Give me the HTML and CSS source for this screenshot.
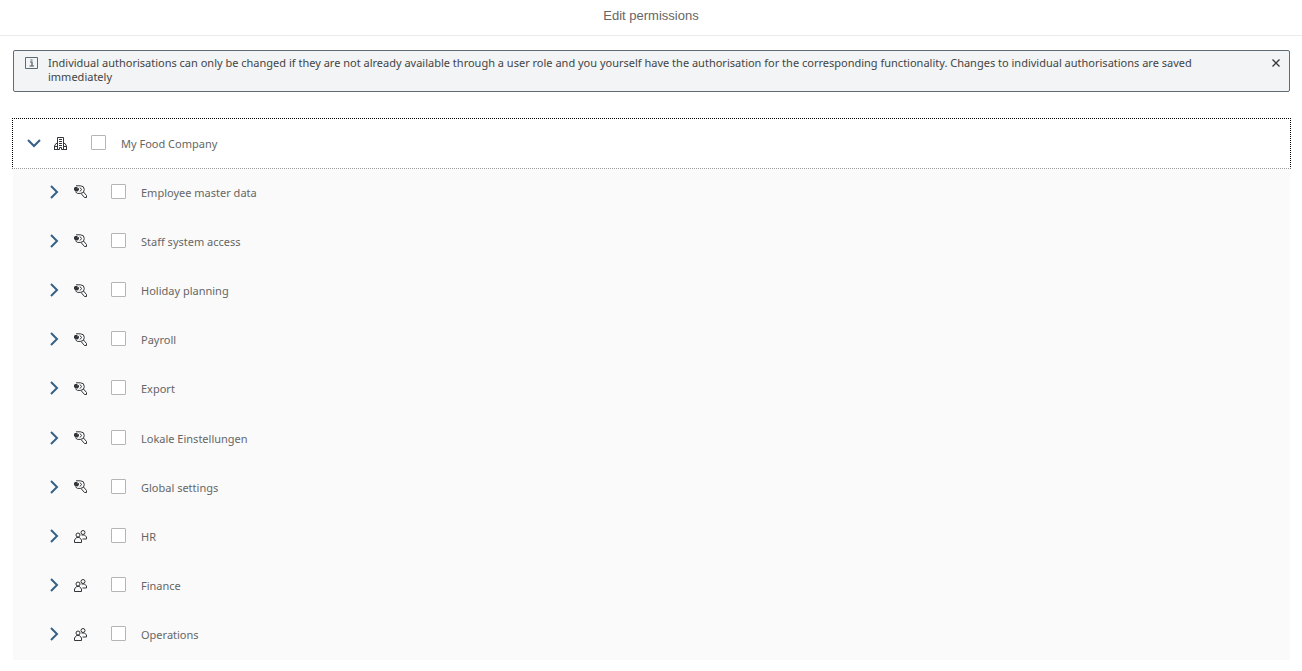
FILE: index.html
```html
<!DOCTYPE html>
<html lang="en">
<head>
    <meta charset="UTF-8">
    <meta name="viewport" content="width=device-width, initial-scale=1.0">
    <title>Edit permissions</title>
    <link rel="stylesheet" href="styles.css">
</head>
<body>
    <!-- icons shared by the rows -->
    <svg class="sprite" aria-hidden="true">
        <symbol id="down" viewBox="0 0 14 14"><path d="M1 4l6 6 6-6" fill="none" stroke="#346187" stroke-width="2"/></symbol>
        <symbol id="right" viewBox="0 0 14 14"><path d="M4 1l6 6-6 6" fill="none" stroke="#346187" stroke-width="2"/></symbol>
        <symbol id="building" viewBox="0 0 13 13">
            <path d="M3.500 12V.5h6V12M.5 12.500V9l1.500-2.500h1.500M9.500 6.500H11L12.500 9v3.500M0 12.500h5.500v-2h2v2H13" fill="none" stroke="#32363a"/>
            <path d="M5 2.500h3M5 4.500h3M5 6.500h3M5 8.500h3M1 9.500h2M10 9.500h2" fill="none" stroke="#32363a"/>
        </symbol>
        <symbol id="key" viewBox="0 0 13 13">
            <path d="M2 .8h4.500a3.800 3.800 0 0 1 0 7.600H3.500L1.500 7" fill="none" stroke="#32363a"/>
            <path d="M1 2h2.500v1.500L5 3v2L3.500 6.500H1.500L0 5V3z" fill="#32363a"/>
            <path d="M6 2.500l1.500 2L6 6.500M9.500 7l3 3.500v2h-2L7 8.500" fill="none" stroke="#32363a"/>
        </symbol>
        <symbol id="group" viewBox="0 0 13 13">
            <circle cx="4" cy="5" r="2" fill="none" stroke="#32363a"/>
            <path d="M.5 12.500v-2.500L2.500 7.500h3L7.500 10v2.500z" fill="none" stroke="#32363a"/>
            <circle cx="9" cy="2.500" r="2" fill="none" stroke="#32363a"/>
            <path d="M7.500 5h3l2 2v2H8.500" fill="none" stroke="#32363a"/>
        </symbol>
    </svg>

    <header class="title-bar">
        <h1>Edit permissions</h1>
    </header>

    <main class="content">
        <div class="message" role="status">
            <svg class="info" viewBox="0 0 13 12" aria-hidden="true">
                <path d="M.5.5h12v11H.5z" fill="none" stroke="#5a6b76"/>
                <path d="M5 5h2v4M4.500 9h4.500M5.500 3h2" fill="none" stroke="#4a5862" stroke-width="1.200"/>
            </svg>
            <p>Individual authorisations can only be changed if they are not already available through a user role and you yourself have the authorisation for the corresponding functionality. Changes to individual authorisations are saved immediately</p>
            <button class="close" type="button" aria-label="Close">
                <svg viewBox="0 0 8 8" aria-hidden="true"><path d="M.5.5l7 7M7.500.5l-7 7" stroke="#32363a" stroke-width="1.300"/></svg>
            </button>
        </div>

        <ul class="tree">
            <li class="row root">
                <button class="toggle" type="button" aria-label="Collapse"><svg><use href="#down"/></svg></button>
                <svg class="icon"><use href="#building"/></svg>
                <input type="checkbox" id="company"><label for="company">My Food Company</label>
            </li>
            <li class="row">
                <button class="toggle" type="button" aria-label="Expand"><svg><use href="#right"/></svg></button>
                <svg class="icon"><use href="#key"/></svg>
                <input type="checkbox" id="employee"><label for="employee">Employee master data</label>
            </li>
            <li class="row">
                <button class="toggle" type="button" aria-label="Expand"><svg><use href="#right"/></svg></button>
                <svg class="icon"><use href="#key"/></svg>
                <input type="checkbox" id="staff"><label for="staff">Staff system access</label>
            </li>
            <li class="row">
                <button class="toggle" type="button" aria-label="Expand"><svg><use href="#right"/></svg></button>
                <svg class="icon"><use href="#key"/></svg>
                <input type="checkbox" id="holiday"><label for="holiday">Holiday planning</label>
            </li>
            <li class="row">
                <button class="toggle" type="button" aria-label="Expand"><svg><use href="#right"/></svg></button>
                <svg class="icon"><use href="#key"/></svg>
                <input type="checkbox" id="payroll"><label for="payroll">Payroll</label>
            </li>
            <li class="row">
                <button class="toggle" type="button" aria-label="Expand"><svg><use href="#right"/></svg></button>
                <svg class="icon"><use href="#key"/></svg>
                <input type="checkbox" id="export"><label for="export">Export</label>
            </li>
            <li class="row">
                <button class="toggle" type="button" aria-label="Expand"><svg><use href="#right"/></svg></button>
                <svg class="icon"><use href="#key"/></svg>
                <input type="checkbox" id="local"><label for="local">Lokale Einstellungen</label>
            </li>
            <li class="row">
                <button class="toggle" type="button" aria-label="Expand"><svg><use href="#right"/></svg></button>
                <svg class="icon"><use href="#key"/></svg>
                <input type="checkbox" id="global"><label for="global">Global settings</label>
            </li>
            <li class="row">
                <button class="toggle" type="button" aria-label="Expand"><svg><use href="#right"/></svg></button>
                <svg class="icon"><use href="#group"/></svg>
                <input type="checkbox" id="hr"><label for="hr">HR</label>
            </li>
            <li class="row">
                <button class="toggle" type="button" aria-label="Expand"><svg><use href="#right"/></svg></button>
                <svg class="icon"><use href="#group"/></svg>
                <input type="checkbox" id="finance"><label for="finance">Finance</label>
            </li>
            <li class="row">
                <button class="toggle" type="button" aria-label="Expand"><svg><use href="#right"/></svg></button>
                <svg class="icon"><use href="#group"/></svg>
                <input type="checkbox" id="operations"><label for="operations">Operations</label>
            </li>
        </ul>
    </main>
</body>
</html>
```
FILE: styles.css
```css
* {
    box-sizing: border-box;
}
body {
    margin: 0;
    min-height: 100vh;
    display: flex;
    flex-direction: column;
    background: #fff;
    color: #666;
    font-family: "Noto Sans", sans-serif;
    font-size: 11px;
}
.sprite {
    display: none;
}
.title-bar {
    padding: 7px 0 10px;
    border-bottom: 1px solid #ebebeb;
    text-align: center;
}
h1 {
    margin: 0;
    font-family: "Liberation Sans", sans-serif;
    font-size: 13px;
    line-height: 18px;
    font-weight: normal;
}
.content {
    flex: 1;
    display: flex;
    flex-direction: column;
    padding: 14px 12px 11px 13px;
}
.message {
    display: flex;
    align-items: flex-start;
    padding: 5px 9px 7px 11px;
    border: 1px solid #5f6c76;
    border-radius: 2px;
    background: #f2f4f6;
    color: #444;
}
.message p {
    flex: 1;
    margin: 0 60px 0 10px;
    line-height: 14px;
}
.info {
    width: 13px;
    height: 12px;
    margin-top: 1px;
}
.close {
    padding: 3px 0;
    border: 0;
    background: none;
}
.close svg {
    display: block;
    width: 8px;
    height: 8px;
}
.tree {
    flex: 1;
    display: grid;
    grid-auto-rows: 1fr;
    margin: 27px 0 0;
    padding: 0;
    list-style: none;
}
.row {
    display: flex;
    align-items: center;
    min-height: 48px;
    padding: 0 0 3px 34px;
    background: #fafafa;
}
.root {
    z-index: 1;
    margin: -1px;
    padding: 0 0 2px 14px;
    border: 1px dotted #000;
    border-bottom-color: #999;
    background: #fff;
}
.toggle {
    padding: 1px 0 0;
    border: 0;
    background: none;
}
.toggle svg {
    display: block;
    width: 14px;
    height: 14px;
}
.icon {
    width: 13px;
    height: 13px;
    margin: 1px 24px 0 13px;
}
input {
    appearance: none;
    width: 15px;
    height: 15px;
    margin: 0;
    border: 1px solid #b5b5b5;
    border-radius: 1px;
    background: #fff;
}
label {
    padding: 3px 0 0 15px;
    line-height: 18px;
}
```
